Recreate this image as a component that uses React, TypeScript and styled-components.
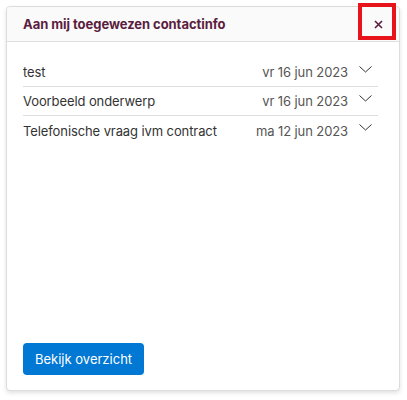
import styled, { createGlobalStyle } from 'styled-components';

const GlobalStyle = createGlobalStyle`
  html, body {
    margin: 0;
    padding: 0;
    background: #ffffff;
    font-family: Inter, "Noto Sans", sans-serif;
  }
`;

const Page = styled.div`
  padding: 6px 7px 9px 6px;
  box-sizing: border-box;
  width: 407px;
  height: 400px;
`;

const Card = styled.div`
  position: relative;
  height: 100%;
  box-sizing: border-box;
  border: 1px solid #dcdcdc;
  border-radius: 4px;
  box-shadow: 0 2px 4px rgba(0, 0, 0, 0.12);
  background: #ffffff;
  display: flex;
  flex-direction: column;
`;

const Header = styled.div`
  height: 35px;
  box-sizing: border-box;
  display: flex;
  align-items: center;
  justify-content: space-between;
  padding: 0 0 0 16px;
  background: #fafafa;
  border-bottom: 1px solid #e0e0e0;
  border-radius: 4px 4px 0 0;
`;

const Title = styled.h2`
  margin: 0;
  font-size: 13px;
  font-weight: 700;
  letter-spacing: -0.05px;
  color: #5a1d40;
`;

const CloseButton = styled.button`
  width: 36px;
  height: 34px;
  border: none;
  background: transparent;
  display: flex;
  align-items: center;
  justify-content: center;
  padding: 0;
  margin-right: 3px;
  cursor: pointer;
`;

const Highlight = styled.div`
  position: absolute;
  left: 351px;
  top: -4px;
  width: 38px;
  height: 37px;
  box-sizing: border-box;
  border: 4px solid #e8141c;
  pointer-events: none;
`;

const Body = styled.div`
  flex: 1;
  display: flex;
  flex-direction: column;
  padding: 16px 21px 15px 16px;
`;

const List = styled.ul`
  list-style: none;
  margin: 0;
  padding: 0;
  flex: 1;
`;

const Row = styled.li<{ $last?: boolean }>`
  height: 29px;
  box-sizing: border-box;
  display: flex;
  align-items: center;
  font-size: 13px;
  letter-spacing: -0.1px;
  color: #333333;
  border-bottom: ${(p) => (p.$last ? 'none' : '1px solid #dedede')};
`;

const Subject = styled.span`
  flex: 1;
`;

const DateText = styled.span`
  color: #555555;
`;

const Chevron = styled.span`
  width: 30px;
  display: flex;
  justify-content: flex-end;
  padding-right: 6px;
  box-sizing: border-box;
  margin-top: -6px;
`;

const PrimaryButton = styled.button`
  align-self: flex-start;
  height: 32px;
  padding: 0 12px;
  border: none;
  border-radius: 4px;
  background: #0078d4;
  color: #ffffff;
  font-family: Inter, "Noto Sans", sans-serif;
  font-size: 13px;
  cursor: pointer;
`;

const items = [
  { subject: 'test', date: 'vr 16 jun 2023' },
  { subject: 'Voorbeeld onderwerp', date: 'vr 16 jun 2023' },
  { subject: 'Telefonische vraag ivm contract', date: 'ma 12 jun 2023' },
];

export default function App() {
  return (
    <Page>
      <GlobalStyle />
      <Card>
        <Header>
          <Title>Aan mij toegewezen contactinfo</Title>
          <CloseButton aria-label="Sluiten">
            <svg width="9" height="9" viewBox="0 0 9 9">
              <path d="M1 1L8 8M8 1L1 8" stroke="#5a1d40" strokeWidth="1.6" />
            </svg>
          </CloseButton>
        </Header>
        <Highlight />
        <Body>
          <List>
            {items.map((item, i) => (
              <Row key={item.subject} $last={i === items.length - 1}>
                <Subject>{item.subject}</Subject>
                <DateText>{item.date}</DateText>
                <Chevron>
                  <svg width="13" height="7" viewBox="0 0 13 7">
                    <path d="M0.5 0.5L6.5 6L12.5 0.5" stroke="#333" strokeWidth="1" fill="none" />
                  </svg>
                </Chevron>
              </Row>
            ))}
          </List>
          <PrimaryButton>Bekijk overzicht</PrimaryButton>
        </Body>
      </Card>
    </Page>
  );
}
